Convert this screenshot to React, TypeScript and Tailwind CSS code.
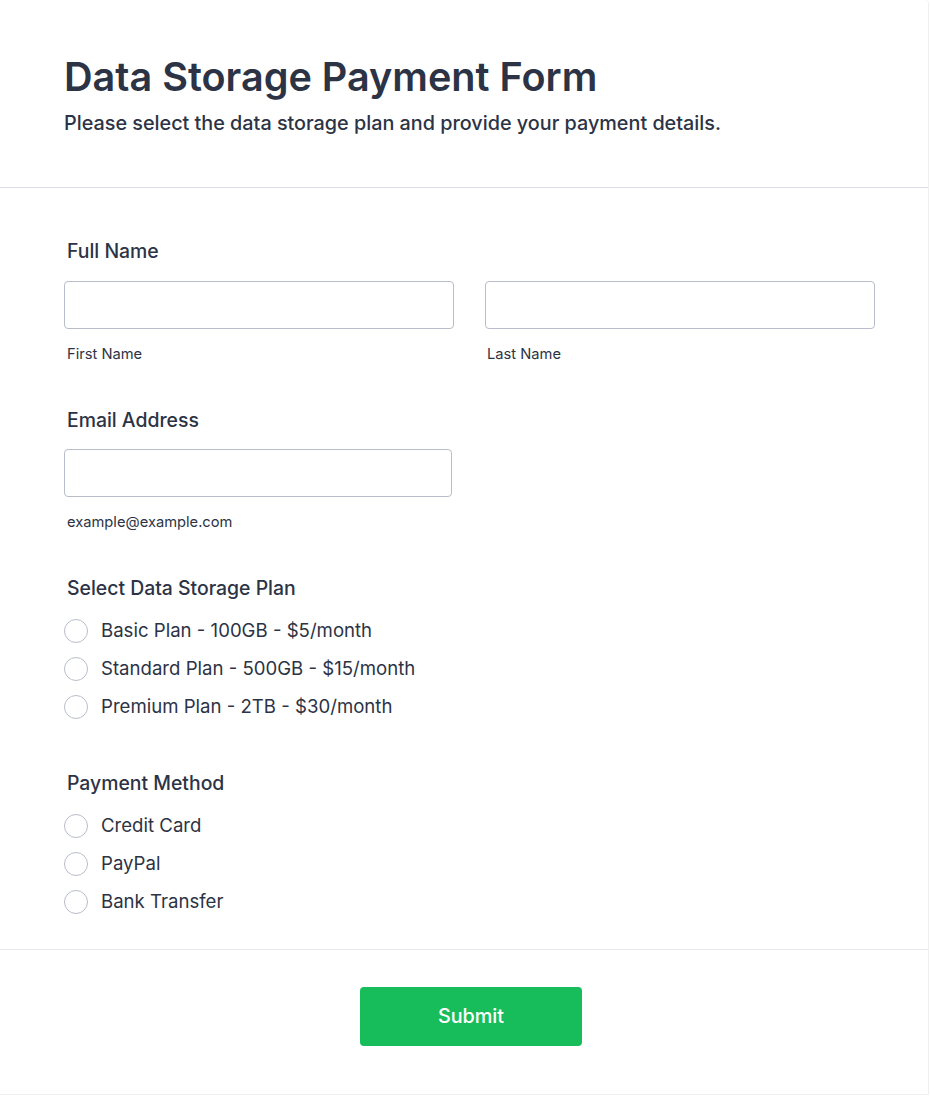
import React from "react";

const Radio = ({ label }: { label: string }) => (
  <label className="flex items-center h-[38px]">
    <span className="w-6 h-6 rounded-full border border-[#b8bdc9] bg-white shrink-0" />
    <span className="ml-[13px] text-[18.6px] text-[#2c3345]">{label}</span>
  </label>
);

export default function App() {
  return (
    <div className="bg-white min-h-[1096px]" style={{ fontFamily: "Inter, 'Noto Sans', sans-serif" }}>
      <div className="w-[929px] h-[1095px] bg-white border-r border-b border-[#eef0f4] rounded-tr-[4px] flex flex-col">
        <div className="px-16 pt-[55px] h-[188px] border-b border-[#dcdde6]">
          <h1 className="text-[39.6px] font-semibold text-[#2c3345] leading-[44px]">Data Storage Payment Form</h1>
          <p className="mt-[11px] text-[19.8px] font-medium text-[#2c3345] leading-[26px]">
            Please select the data storage plan and provide your payment details.
          </p>
        </div>

        <div className="px-16 pt-[50px] h-[762px] border-b border-[#e6e8ee]">
          <div className="text-[19.4px] font-medium text-[#2c3345] leading-[27px] pl-[3px]">Full Name</div>
          <div className="mt-[16px] flex gap-[31px] w-[811px]">
            <div className="flex-1">
              <div className="h-12 rounded-[4px] border border-[#b8bdc9] bg-white" />
              <div className="mt-[15px] text-[14.7px] text-[#2c3345] leading-[20px] pl-[3px]">First Name</div>
            </div>
            <div className="flex-1">
              <div className="h-12 rounded-[4px] border border-[#b8bdc9] bg-white" />
              <div className="mt-[15px] text-[14.7px] text-[#2c3345] leading-[20px] pl-[2px]">Last Name</div>
            </div>
          </div>

          <div className="mt-[43px] text-[19.4px] font-medium text-[#2c3345] leading-[27px] pl-[3px]">Email Address</div>
          <div className="mt-[15px] w-[388px] h-12 rounded-[4px] border border-[#b8bdc9] bg-white" />
          <div className="mt-[15px] text-[14.7px] text-[#2c3345] leading-[20px] pl-[3px]">example@example.com</div>

          <div className="mt-[43px] text-[19.4px] font-medium text-[#2c3345] leading-[27px] pl-[3px]">Select Data Storage Plan</div>
          <div className="mt-[10px] flex flex-col">
            <Radio label="Basic Plan - 100GB - $5/month" />
            <Radio label="Standard Plan - 500GB - $15/month" />
            <Radio label="Premium Plan - 2TB - $30/month" />
          </div>

          <div className="mt-[44px] text-[19.4px] font-medium text-[#2c3345] leading-[27px] pl-[3px]">Payment Method</div>
          <div className="mt-[10px] flex flex-col">
            <Radio label="Credit Card" />
            <Radio label="PayPal" />
            <Radio label="Bank Transfer" />
          </div>
        </div>

        <div className="flex justify-center pt-[37px]">
          <button className="ml-[14px] w-[222px] h-[59px] rounded-[4px] bg-[#18bd5b] text-white text-[19.8px] font-medium">
            Submit
          </button>
        </div>
      </div>
    </div>
  );
}
